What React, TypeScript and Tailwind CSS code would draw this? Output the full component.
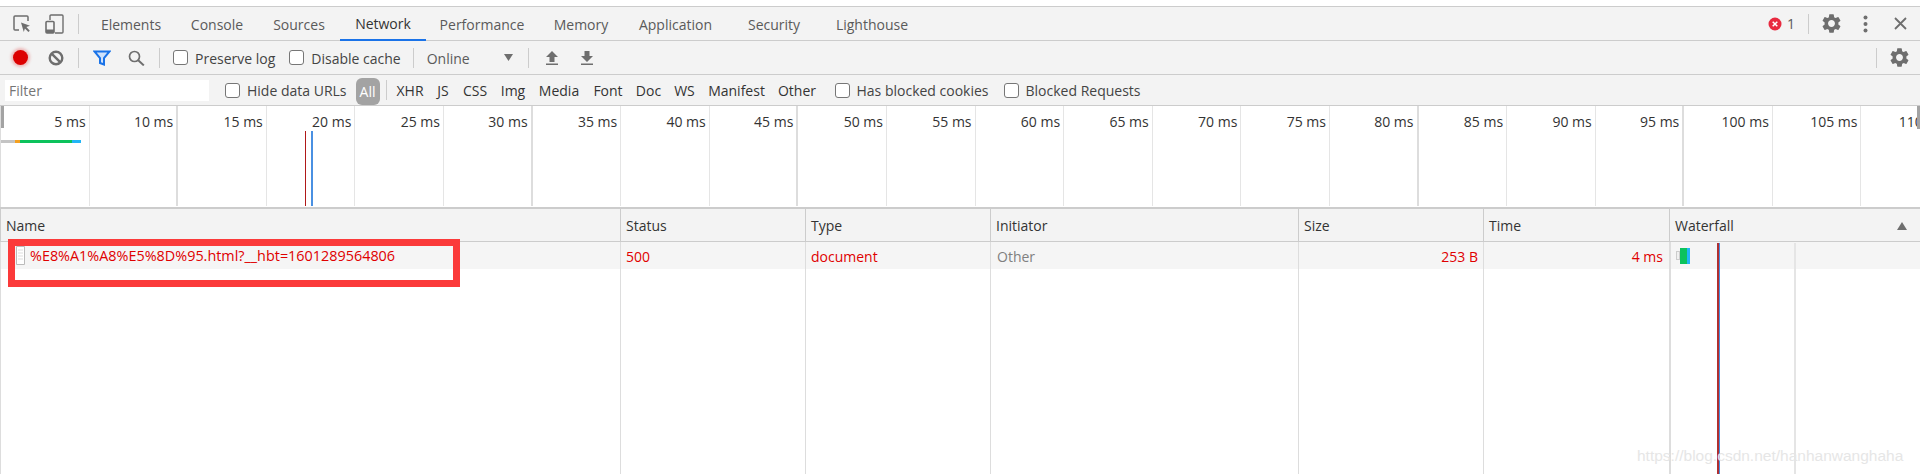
import { MdSettings } from 'react-icons/md'

const tabs = [
  { label: 'Elements', className: 'w-[90px]' },
  { label: 'Console', className: 'w-[82px]' },
  { label: 'Sources', className: 'w-[82px]' },
  { label: 'Network', className: 'w-[86px] text-[#333] border-b-2 border-[#1a73e8]' },
  { label: 'Performance', className: 'w-[112px]' },
  { label: 'Memory', className: 'w-[86px]' },
  { label: 'Application', className: 'w-[103px]' },
  { label: 'Security', className: 'w-[94px]' },
  { label: 'Lighthouse', className: 'w-[102px]' },
]

const filters = [
  { label: 'XHR', className: 'ml-[9px] w-[29px]' },
  { label: 'JS', className: 'ml-[12px] w-[13px]' },
  { label: 'CSS', className: 'ml-[13px] w-[25px]' },
  { label: 'Img', className: 'ml-[13px] w-[25px]' },
  { label: 'Media', className: 'ml-[13px] w-[41px]' },
  { label: 'Font', className: 'ml-[14px] w-[29px]' },
  { label: 'Doc', className: 'ml-[13px] w-[26px]' },
  { label: 'WS', className: 'ml-[12px] w-[22px]' },
  { label: 'Manifest', className: 'ml-[13px] w-[56px]' },
  { label: 'Other', className: 'ml-[14px] w-[37px]' },
]

const ticks = Array.from({ length: 22 }, (_, i) => `${(i + 1) * 5} ms`)
const darkTicks = [1, 5, 8, 15, 18]

const columnTemplate =
  'grid grid-cols-[620px_185px_185px_308px_185px_186px_251px]'

function Sep({ className = '' }: { className?: string }) {
  return <div className={`w-px h-[20px] bg-[#ccc] shrink-0 ${className}`} />
}

function Check({ label, className = '' }: { label: string; className?: string }) {
  return (
    <label className={`flex items-center gap-[7px] shrink-0 ${className}`}>
      <span className="w-[15px] h-[15px] rounded-[3px] border border-[#767676] bg-white" />
      <span className="pt-[2px] text-[#444] whitespace-nowrap">{label}</span>
    </label>
  )
}

export default function App() {
  return (
    <div className="relative w-[1920px] h-[474px] overflow-hidden bg-white font-['Open_Sans',sans-serif] text-[14px] leading-none text-[#333]">
      <div className="h-[6px]" />

      {/* Main tabs */}
      <div className="flex items-stretch h-[35px] bg-[#f3f3f3] border-y border-[#ccc]">
        <div className="flex items-center w-[78px] shrink-0">
          <svg className="ml-[13px]" width="18" height="18" viewBox="0 0 18 18" fill="none">
            <path d="M6 15H2a1 1 0 0 1-1-1V2a1 1 0 0 1 1-1h12a1 1 0 0 1 1 1v4" stroke="#6e6e6e" strokeWidth="1.5" />
            <path d="M8 7.5l9 3.2-3.6 1.4 3.4 3.6-1.4 1.4-3.5-3.5L10.8 17z" fill="#6e6e6e" />
          </svg>
          <svg className="ml-[14px]" width="19" height="20" viewBox="0 0 19 20" fill="none">
            <path d="M5 6V2a1 1 0 0 1 1-1h11a1 1 0 0 1 1 1v16a1 1 0 0 1-1 1H10" stroke="#6e6e6e" strokeWidth="1.4" />
            <rect x="1" y="7.5" width="8" height="11.5" rx="1" stroke="#6e6e6e" strokeWidth="1.6" />
            <rect x="1" y="15.5" width="8" height="3.5" fill="#6e6e6e" />
          </svg>
        </div>
        <Sep className="self-center" />
        <div className="flex items-stretch ml-[7px]">
          {tabs.map((t) => (
            <div key={t.label} className={`flex items-center justify-center pt-[2px] text-[#5a5a5a] -mb-px ${t.className}`}>
              {t.label}
            </div>
          ))}
        </div>
        <div className="flex items-center ml-auto">
          <svg width="14" height="14" viewBox="0 0 14 14">
            <circle cx="7" cy="7" r="6.5" fill="#e8293f" />
            <path d="M4.7 4.7l4.6 4.6M9.3 4.7l-4.6 4.6" stroke="#fff" strokeWidth="1.5" />
          </svg>
          <span className="ml-[5px] text-[#5a5a5a]">1</span>
          <Sep className="ml-[13px]" />
          <MdSettings className="ml-[11px] text-[#6e6e6e]" size={23} />
          <svg className="ml-[20px]" width="5" height="18" viewBox="0 0 5 18">
            <circle cx="2.5" cy="2.5" r="2" fill="#6e6e6e" />
            <circle cx="2.5" cy="9" r="2" fill="#6e6e6e" />
            <circle cx="2.5" cy="15.5" r="2" fill="#6e6e6e" />
          </svg>
          <svg className="ml-[26px] mr-[13px]" width="13" height="13" viewBox="0 0 13 13">
            <path d="M1 1l11 11M12 1L1 12" stroke="#6e6e6e" strokeWidth="1.8" />
          </svg>
        </div>
      </div>

      {/* Network toolbar */}
      <div className="flex items-center h-[34px] bg-[#f3f3f3] border-b border-[#ccc]">
        <span className="ml-[13px] w-[15px] h-[15px] rounded-full bg-[#dc0000] shadow-[0_0_3px_2px_rgba(220,0,0,0.25)]" />
        <svg className="ml-[20px]" width="16" height="16" viewBox="0 0 16 16" fill="none">
          <circle cx="8" cy="8" r="6.3" stroke="#6e6e6e" strokeWidth="2.4" />
          <path d="M3.6 3.6l8.8 8.8" stroke="#6e6e6e" strokeWidth="2.4" />
        </svg>
        <Sep className="ml-[14px]" />
        <svg className="ml-[14px]" width="18" height="16" viewBox="0 0 18 16" fill="none">
          <path d="M1.5 1.5h15L11 8v6.5L7 13V8z" fill="#cfe2fb" stroke="#1a73e8" strokeWidth="2" />
        </svg>
        <svg className="ml-[17px]" width="17" height="16" viewBox="0 0 17 16" fill="none">
          <circle cx="6.5" cy="6.5" r="5" stroke="#6e6e6e" strokeWidth="1.7" />
          <path d="M10.2 10.2l5.6 5.2" stroke="#6e6e6e" strokeWidth="2" />
        </svg>
        <Sep className="ml-[14px]" />
        <Check label="Preserve log" className="ml-[13px]" />
        <Check label="Disable cache" className="ml-[14px]" />
        <Sep className="ml-[12px]" />
        <span className="ml-[13px] pt-[2px] text-[#5a5a5a]">Online</span>
        <svg className="ml-[34px]" width="9" height="7" viewBox="0 0 9 7">
          <path d="M0 0h9L4.5 7z" fill="#6e6e6e" />
        </svg>
        <Sep className="ml-[15px]" />
        <svg className="ml-[16px]" width="14" height="14" viewBox="0 0 14 14">
          <path d="M7 0l6 6H9.5v5h-5V6H1zM1 12.5h12V14H1z" fill="#6e6e6e" />
        </svg>
        <svg className="ml-[21px]" width="14" height="14" viewBox="0 0 14 14">
          <path d="M7 11l6-6H9.5V0h-5v5H1zM1 12.5h12V14H1z" fill="#6e6e6e" />
        </svg>
        <Sep className="ml-auto" />
        <MdSettings className="ml-[11px] mr-[9px] text-[#6e6e6e]" size={23} />
      </div>

      {/* Filter bar */}
      <div className="flex items-center h-[31px] bg-[#f3f3f3] border-b border-[#ccc]">
        <div className="ml-[5px] w-[204px] h-[21px] bg-white flex items-center pl-[4px] pt-[1px] text-[#757575] shrink-0">Filter</div>
        <Check label="Hide data URLs" className="ml-[16px]" />
        <span className="ml-[9px] w-[24px] h-[27px] mt-[3px] rounded-[6px] bg-[#a3a3a3] text-white flex items-center justify-center">All</span>
        <Sep className="ml-[6px]" />
        {filters.map((f) => (
          <span key={f.label} className={`pt-[2px] text-center whitespace-nowrap text-[#333] flex justify-center ${f.className}`}>
            {f.label}
          </span>
        ))}
        <Check label="Has blocked cookies" className="ml-[19px]" />
        <Check label="Blocked Requests" className="ml-[15px]" />
      </div>

      {/* Overview */}
      <div className="relative h-[101px] overflow-hidden border-l border-[#ddd]">
        <div className="grid grid-cols-[repeat(22,88.6px)] w-max h-[100px]">
          {ticks.map((t, i) => (
            <div
              key={t}
              className={`h-full pt-[9px] pr-[3px] text-right border-r whitespace-nowrap text-[#333] ${darkTicks.includes(i) ? 'border-r-2 border-[#ddd]' : 'border-[#e5e5e5]'}`}
            >
              {t}
            </div>
          ))}
        </div>
        <span className="absolute left-0 top-0 w-[3px] h-[22px] bg-[#a3a3a3]" />
        <span className="absolute right-0 top-0 w-[3px] h-[23px] bg-[#a3a3a3]" />
        <div className="absolute left-0 top-[34px] flex h-[3px]">
          <span className="w-[14px] bg-[#c4c4c4]" />
          <span className="w-[5px] bg-[#f4a020]" />
          <span className="w-[52px] bg-[#0cc25c]" />
          <span className="w-[9px] bg-[#22b5f5]" />
        </div>
        <span className="absolute left-[304px] top-[25px] bottom-[1px] w-px bg-[#b01818]" />
        <span className="absolute left-[310px] top-[25px] bottom-[1px] w-[2px] bg-[#4a90e2]" />
      </div>

      {/* Request table */}
      <div className="relative border-t-2 border-[#ccc] h-[267px] flex flex-col">
        <div className={`${columnTemplate} h-[33px] bg-[#f3f3f3] border-b border-[#ccc] shrink-0`}>
          {['Name', 'Status', 'Type', 'Initiator', 'Size', 'Time'].map((h) => (
            <div key={h} className="flex items-center pl-[5px] pt-[2px] border-l border-[#ccc] text-[#333]">
              {h}
            </div>
          ))}
          <div className="flex items-center justify-between pl-[5px] pr-[13px] pt-[1px] border-l border-[#ccc] text-[#333]">
            Waterfall
            <svg width="10" height="8" viewBox="0 0 10 8">
              <path d="M5 0l5 8H0z" fill="#6e6e6e" />
            </svg>
          </div>
        </div>
        <div className={`${columnTemplate} h-[27px] bg-[#f5f5f5] shrink-0 text-[#e00000]`}>
          <div className="flex items-center pl-[15px] border-l border-[#ddd]">
            <svg width="9" height="19" viewBox="0 0 9 19">
              <path d="M.5.5h8v18h-8z" fill="#fff" stroke="#bbb" />
              <path d="M2 4h5M2 7h5M2 10h5M2 13h5" stroke="#ddd" />
            </svg>
            <span className="ml-[5px] pt-[1px] text-[14.4px]">%E8%A1%A8%E5%8D%95.html?__hbt=1601289564806</span>
          </div>
          <div className="flex items-center pl-[5px] pt-[2px] border-l border-[#ddd]">500</div>
          <div className="flex items-center pl-[5px] pt-[2px] border-l border-[#ddd]">document</div>
          <div className="flex items-center pl-[6px] pt-[2px] border-l border-[#ddd] text-[#808080]">Other</div>
          <div className="flex items-center justify-end pr-[5px] pt-[2px] border-l border-[#ddd]">253 B</div>
          <div className="flex items-center justify-end pr-[6px] pt-[2px] border-l border-[#ddd]">4 ms</div>
          <div className="flex items-center pl-[5px] border-l-2 border-[#ddd]">
            <span className="w-[4px] h-[9px] border border-[#ccc] bg-[#f0f0f0]" />
            <span className="w-[7px] h-[16px] bg-[#0cc25c]" />
            <span className="w-[3px] h-[16px] bg-[#22b5f5]" />
          </div>
        </div>
        <div className={`${columnTemplate} flex-1`}>
          <div className="border-l border-[#ddd]" />
          <div className="border-l border-[#ddd]" />
          <div className="border-l border-[#ddd]" />
          <div className="border-l border-[#ddd]" />
          <div className="border-l border-[#ddd]" />
          <div className="border-l border-[#ddd]" />
          <div className="border-l-2 border-[#ddd]" />
        </div>

        {/* Waterfall marks */}
        <span className="absolute left-[1794px] top-[34px] bottom-0 w-[2px] bg-[#e5e5e5]" />
        <span className="absolute left-[1717px] top-[34px] bottom-0 w-[2px] bg-[#b03030]" />
        <span className="absolute left-[1719px] top-[34px] bottom-0 w-px bg-[#4a90e2]" />
      </div>

      {/* Highlight drawn over the screenshot */}
      <div className="absolute left-[8px] top-[239px] w-[452px] h-[48px] border-[7px] border-[#fb3a3a]" />
      <div className="absolute left-[1637px] top-[448px] font-['Liberation_Sans',sans-serif] text-[15.5px] text-[#e6e6e6]">
        https://blog.csdn.net/hanhanwanghaha
      </div>
    </div>
  )
}
